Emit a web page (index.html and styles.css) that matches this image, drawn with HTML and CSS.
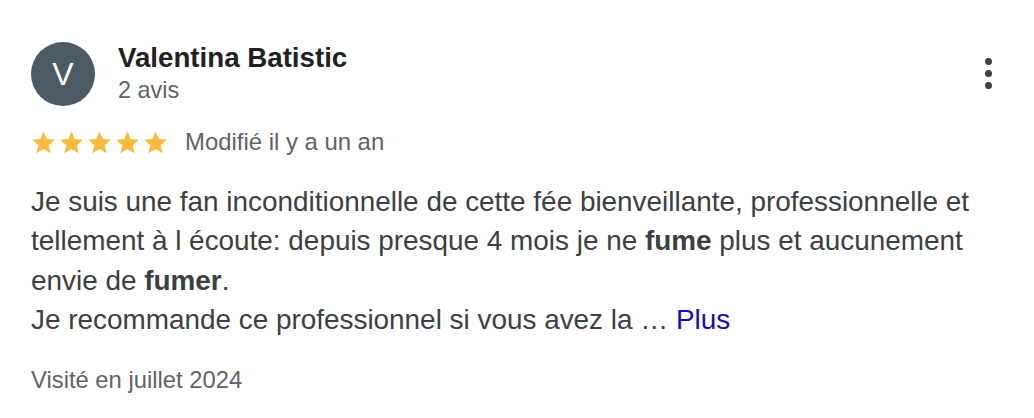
FILE: index.html
```html
<!DOCTYPE html>
<html lang="fr">
<head>
<meta charset="utf-8">
<link rel="stylesheet" href="styles.css">
</head>
<body>
<div class="review">
  <div class="header">
    <div class="avatar">V</div>
    <div class="who">
      <div class="name">Valentina Batistic</div>
      <div class="count">2 avis</div>
    </div>
    <div class="menu"><span></span><span></span><span></span></div>
  </div>
  <div class="meta">
    <div class="stars">
      <svg viewBox="0 0 24 24"><path d="M12 1.5l3.1 7.2 7.8.7-5.9 5.2 1.8 7.7L12 18.2 5.2 22.3 7 14.6 1.1 9.4l7.8-.7z"/></svg>
      <svg viewBox="0 0 24 24"><path d="M12 1.5l3.1 7.2 7.8.7-5.9 5.2 1.8 7.7L12 18.2 5.2 22.3 7 14.6 1.1 9.4l7.8-.7z"/></svg>
      <svg viewBox="0 0 24 24"><path d="M12 1.5l3.1 7.2 7.8.7-5.9 5.2 1.8 7.7L12 18.2 5.2 22.3 7 14.6 1.1 9.4l7.8-.7z"/></svg>
      <svg viewBox="0 0 24 24"><path d="M12 1.5l3.1 7.2 7.8.7-5.9 5.2 1.8 7.7L12 18.2 5.2 22.3 7 14.6 1.1 9.4l7.8-.7z"/></svg>
      <svg viewBox="0 0 24 24"><path d="M12 1.5l3.1 7.2 7.8.7-5.9 5.2 1.8 7.7L12 18.2 5.2 22.3 7 14.6 1.1 9.4l7.8-.7z"/></svg>
    </div>
    <span class="date">Modifié il y a un an</span>
  </div>
  <p class="text">Je suis une fan inconditionnelle de cette fée bienveillante, professionnelle et tellement à l écoute: depuis presque 4 mois je ne <b>fume</b> plus et aucunement envie de <b>fumer</b>.<br>Je recommande ce professionnel si vous avez la … <a class="more" href="#">Plus</a></p>
  <div class="visit">Visité en juillet 2024</div>
</div>
</body>
</html>
```
FILE: styles.css
```css
html, body {
  margin: 0;
  padding: 0;
  background: #fff;
}
body {
  font-family: "Liberation Sans", Arial, sans-serif;
  color: #3c4043;
}
.review {
  padding: 42px 31px 0 31px;
}
.header {
  display: flex;
  align-items: flex-start;
}
.avatar {
  width: 64px;
  height: 64px;
  border-radius: 50%;
  background: #4b5a63;
  color: #fff;
  font-size: 32px;
  display: flex;
  align-items: center;
  justify-content: center;
  flex-shrink: 0;
}
.who {
  margin-left: 23px;
  flex: 1;
}
.name {
  font-size: 27.7px;
  font-weight: bold;
  color: #202124;
  line-height: 32px;
}
.count {
  font-size: 23.4px;
  color: #5f6368;
  line-height: 32px;
}
.menu {
  display: flex;
  flex-direction: column;
  gap: 5px;
  margin-top: 16px;
  margin-right: 11px;
}
.menu span {
  width: 7px;
  height: 7px;
  border-radius: 50%;
  background: #3c4043;
}
.meta {
  display: flex;
  align-items: center;
  margin-top: 21px;
  height: 30px;
}
.stars {
  display: flex;
  gap: 3px;
}
.stars svg {
  width: 25px;
  height: 25px;
  fill: #f4bb3f;
}
.date {
  margin-left: 17px;
  font-size: 23.9px;
  color: #5f6368;
}
.text {
  margin: 25px 0 0 0;
  padding-right: 14px;
  font-size: 27.9px;
  line-height: 39.3px;
  color: #3c4043;
}
.more {
  color: #1a0dab;
  text-decoration: none;
}
.visit {
  margin-top: 27px;
  font-size: 23.8px;
  color: #5f6368;
}
```
